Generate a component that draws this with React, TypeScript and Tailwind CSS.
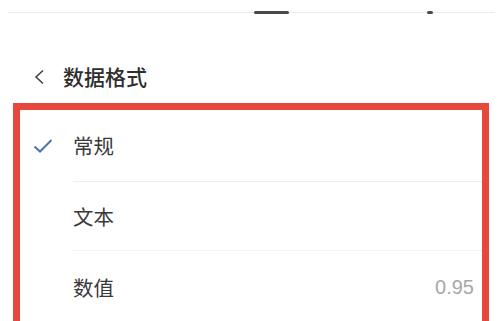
import React from "react";

export default function App() {
  const font = { fontFamily: '"Noto Sans CJK SC", "Noto Sans", sans-serif' };
  return (
    <div className="w-[500px] h-[321px] bg-white overflow-hidden" style={font}>
      <div className="relative h-[25px]">
        <div className="absolute left-[8px] right-[5px] top-[12px] h-[1px] bg-[#ececec]" />
        <div className="absolute left-[254px] top-[11px] w-[35px] h-[3px] rounded-sm bg-[#4a4a4a]" />
        <div className="absolute left-[427px] top-[11px] w-[6px] h-[3px] rounded-sm bg-[#4a4a4a]" />
      </div>
      <div className="flex items-center h-[40px] mt-[31px] mb-[7px] pl-[33px]">
        <svg width="12" height="16" viewBox="0 0 12 16" className="mt-[1px]">
          <path d="M10 1.5 L3 8 L10 14.5" fill="none" stroke="#444" strokeWidth="1.6" />
        </svg>
        <span className="ml-[18px] text-[21px] font-medium text-[#2e2e2e] leading-none">数据格式</span>
      </div>
      <div className="mx-[13px] w-[476px] h-[240px] border-[7px] border-b-0 border-[#e8473b]">
        <div className="flex items-center h-[71px] pl-[13px]">
          <svg width="20" height="16" viewBox="0 0 20 16">
            <path d="M1.5 8.5 L7 13.5 L18.5 2" fill="none" stroke="#4f73ad" strokeWidth="2" />
          </svg>
          <span className="ml-[20px] text-[20.5px] text-[#3a3a3a] leading-none">常规</span>
        </div>
        <div className="ml-[53px] h-[1px] bg-[#eeeeee]" />
        <div className="flex items-center h-[68px] pl-[53px]">
          <span className="text-[20.5px] text-[#3a3a3a] leading-none">文本</span>
        </div>
        <div className="ml-[53px] h-[1px] bg-[#f3f3f3]" />
        <div className="flex items-center justify-between h-[72px] pl-[53px] pr-[8px]">
          <span className="text-[20.5px] text-[#3a3a3a] leading-none">数值</span>
          <span className="text-[20px] text-[#a8a8a8] leading-none" style={{ fontFamily: '"Liberation Sans", Arial, sans-serif' }}>0.95</span>
        </div>
      </div>
    </div>
  );
}
